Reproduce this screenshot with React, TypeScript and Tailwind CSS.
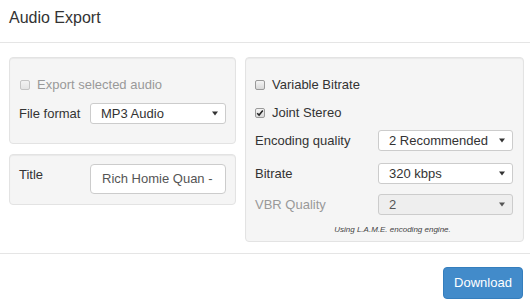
import React from "react";

function Box({ checked = false, disabled = false }: { checked?: boolean; disabled?: boolean }) {
  return (
    <span
      className={
        "relative inline-flex h-[10px] w-[10px] shrink-0 items-center justify-center rounded-[2px] border " +
        (disabled
          ? "border-[#c4c4c4] bg-gradient-to-b from-[#f2f2f2] to-[#e4e4e4]"
          : "border-[#9a9a9a] bg-gradient-to-b from-[#f4f4f4] to-[#d9d9d9]")
      }
    >
      {checked && (
        <svg width="8" height="8" viewBox="0 0 8 8" className="absolute">
          <path d="M1.2 4.2 L3.1 6.1 L6.8 1.6" fill="none" stroke="#222" strokeWidth="1.5" />
        </svg>
      )}
    </span>
  );
}

function Caret({ light = false }: { light?: boolean }) {
  return (
    <svg width="6" height="5" viewBox="0 0 6 5" className="shrink-0">
      <path d="M0 0.5 H6 L3 4.5 Z" fill={light ? "#555" : "#333"} />
    </svg>
  );
}

function Select({ value, disabled = false, className = "" }: { value: string; disabled?: boolean; className?: string }) {
  return (
    <div
      className={
        "flex h-[21px] items-center justify-between rounded-[3px] border border-[#cccccc] pl-[10px] pr-[7px] text-[13px] " +
        (disabled ? "bg-[#eeeeee] text-[#555]" : "bg-white text-[#333]") +
        " " +
        className
      }
    >
      <span>{value}</span>
      <Caret light={disabled} />
    </div>
  );
}

export default function App() {
  return (
    <div
      className="flex h-[305px] w-[530px] flex-col bg-white text-[#333]"
      style={{ fontFamily: '"Liberation Sans", Arial, sans-serif' }}
    >
      <div className="flex h-[43px] items-center border-b border-[#e5e5e5] pb-[7px] pl-[9px] text-[16px]">
        Audio Export
      </div>
      <div className="flex gap-[9px] pb-[11px] pl-[9px] pr-[6px] pt-[14px]">
        <div className="flex w-[227px] flex-col gap-[10px]">
          <div className="h-[87px] rounded-[4px] border border-[#e3e3e3] bg-[#f5f5f5] pl-[9px] pr-[9px] pt-[17px] shadow-[inset_0_1px_1px_rgba(0,0,0,0.05)]">
            <div className="flex h-[20px] items-center gap-[7px] pl-[1px] text-[13px] text-[#999]">
              <Box disabled />
              <span>Export selected audio</span>
            </div>
            <div className="mt-[8px] flex items-center">
              <span className="w-[71px] text-[13px]">File format</span>
              <Select value="MP3 Audio" className="w-[136px]" />
            </div>
          </div>
          <div className="flex h-[51px] rounded-[4px] border border-[#e3e3e3] bg-[#f5f5f5] pl-[9px] pt-[9px] shadow-[inset_0_1px_1px_rgba(0,0,0,0.05)]">
            <span className="w-[71px] pt-[1px] text-[13px]">Title</span>
            <div className="flex h-[30px] w-[136px] items-center rounded-[4px] border border-[#cccccc] bg-white pl-[11px] text-[13px] text-[#555]">
              Rich Homie Quan -
            </div>
          </div>
        </div>
        <div className="h-[185px] w-[279px] rounded-[4px] border border-[#e3e3e3] bg-[#f5f5f5] pl-[9px] pr-[10px] pt-[17px] shadow-[inset_0_1px_1px_rgba(0,0,0,0.05)]">
          <div className="flex h-[20px] items-center gap-[7px] text-[13px]">
            <Box />
            <span>Variable Bitrate</span>
          </div>
          <div className="mt-[8px] flex h-[20px] items-center gap-[7px] text-[13px]">
            <Box checked />
            <span>Joint Stereo</span>
          </div>
          <div className="mt-[7px] flex items-center justify-between">
            <span className="text-[13px]">Encoding quality</span>
            <Select value="2 Recommended" className="w-[135px]" />
          </div>
          <div className="mt-[12px] flex items-center justify-between">
            <span className="text-[13px]">Bitrate</span>
            <Select value="320 kbps" className="w-[135px]" />
          </div>
          <div className="mt-[10px] flex items-center justify-between">
            <span className="text-[13px] text-[#999]">VBR Quality</span>
            <Select value="2" disabled className="w-[135px]" />
          </div>
          <div className="mt-[9px] pl-[17px] text-center text-[8px] italic leading-[12px] text-[#444]">
            Using L.A.M.E. encoding engine.
          </div>
        </div>
      </div>
      <div className="flex justify-end border-t border-[#e5e5e5] pr-[7px] pt-[13px]">
        <button className="h-[32px] w-[80px] rounded-[4px] border border-[#357ebd] bg-[#428bca] text-[13px] text-white">
          Download
        </button>
      </div>
    </div>
  );
}
